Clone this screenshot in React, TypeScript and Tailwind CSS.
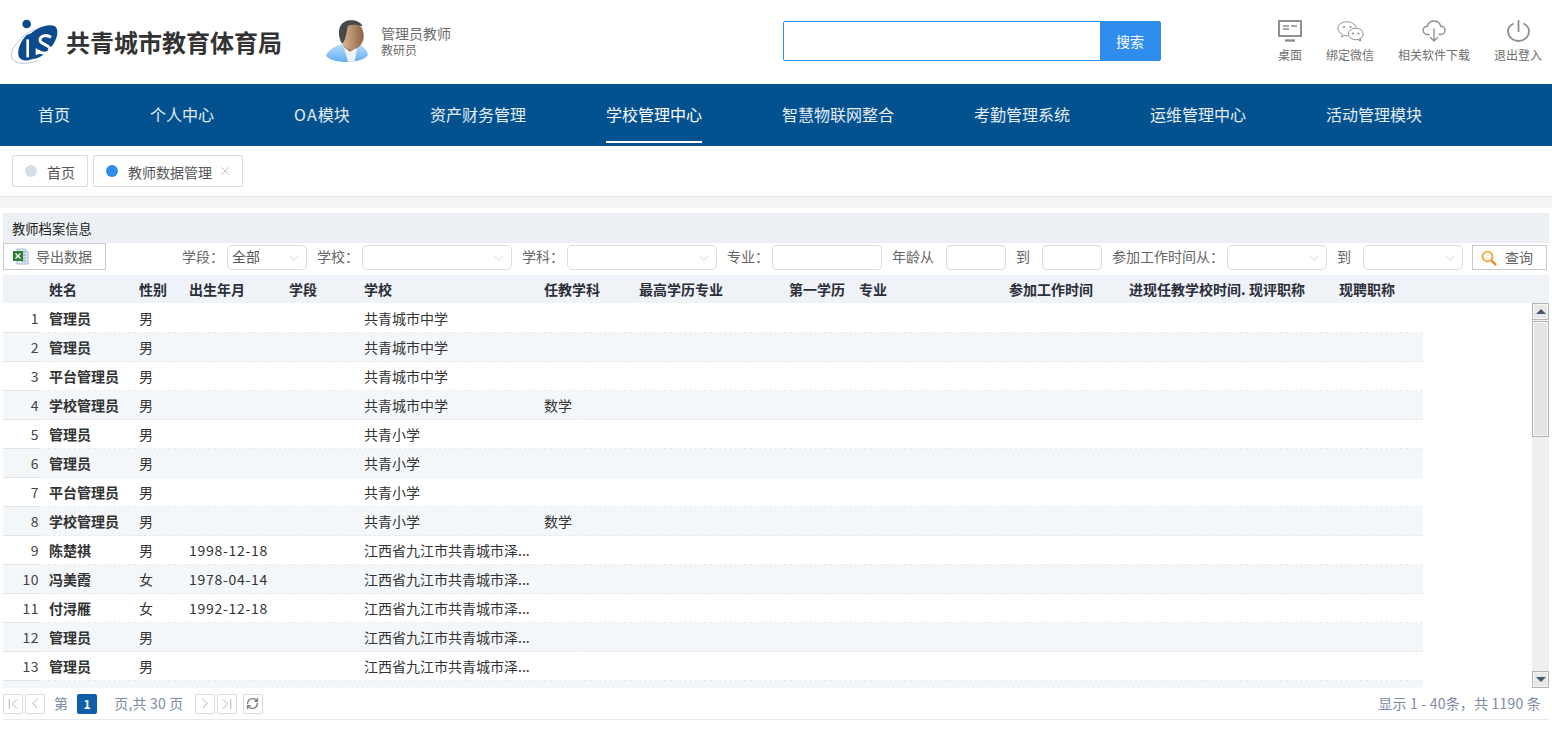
import React from "react";
import { ChevronDown, ChevronFirst, ChevronLast, ChevronLeft, ChevronRight, RefreshCw, X } from "lucide-react";

const navItems = ["首页", "个人中心", "OA模块", "资产财务管理", "学校管理中心", "智慧物联网整合", "考勤管理系统", "运维管理中心", "活动管理模块"];

const headers = ["", "姓名", "性别", "出生年月", "学段", "学校", "任教学科", "最高学历专业", "第一学历", "专业", "参加工作时间", "进现任教学校时间.", "现评职称", "现聘职称"];

const longSchool = "江西省九江市共青城市泽...";

const rows = [
  ["管理员", "男", "", "共青城市中学", ""],
  ["管理员", "男", "", "共青城市中学", ""],
  ["平台管理员", "男", "", "共青城市中学", ""],
  ["学校管理员", "男", "", "共青城市中学", "数学"],
  ["管理员", "男", "", "共青小学", ""],
  ["管理员", "男", "", "共青小学", ""],
  ["平台管理员", "男", "", "共青小学", ""],
  ["学校管理员", "男", "", "共青小学", "数学"],
  ["陈楚祺", "男", "1998-12-18", longSchool, ""],
  ["冯美霞", "女", "1978-04-14", longSchool, ""],
  ["付浔雁", "女", "1992-12-18", longSchool, ""],
  ["管理员", "男", "", longSchool, ""],
  ["管理员", "男", "", longSchool, ""],
  ["", "", "", "", ""],
];

const gridCols = "grid grid-cols-[43px_90px_50px_100px_75px_180px_95px_150px_70px_150px_120px_120px_90px_87px]";

// coordinates are 3x the screen pixels
const Logo = () => (
  <svg width="60" height="58" viewBox="0 0 180 174" className="shrink-0">
    <path d="M88 52 C50 70 14 110 20 136 C25 156 60 160 100 146" fill="none" stroke="#a9bdd3" strokeWidth="2.500" />
    <path d="M76 66 C95 46 130 34 148 42 C164 50 158 82 138 106 C122 126 100 142 84 140 C74 138 70 128 72 118 Z" fill="#0b4a8c" />
    <path d="M40 128 C38 105 50 84 66 68 L86 62 C80 85 84 115 92 136 L84 141 C62 150 42 144 40 128 Z" fill="#0b4a8c" />
    <circle cx="65" cy="36" r="13" fill="#0b4a8c" />
    <path d="M68 82 L68 136" stroke="#fff" strokeWidth="8" />
    <path d="M138 76 C122 66 106 72 105 84 C105 98 136 98 135 112 C133 126 112 128 98 116" fill="none" stroke="#fff" strokeWidth="9" />
    <path d="M92 108 L112 122 L92 130 Z" fill="#fff" />
  </svg>
);

const Avatar = () => (
  <svg width="55" height="52" viewBox="0 0 165 156" className="shrink-0">
    <defs>
      <linearGradient id="shirt" x1="0" y1="0" x2="0" y2="1">
        <stop offset="0" stopColor="#b9defa" />
        <stop offset="1" stopColor="#62adf2" />
      </linearGradient>
      <linearGradient id="skin" x1="0" y1="0" x2="1" y2="0">
        <stop offset="0" stopColor="#e3c09e" />
        <stop offset="1" stopColor="#8c6243" />
      </linearGradient>
    </defs>
    <path d="M18 122 C24 106 42 96 62 88 L118 88 C132 96 142 108 144 120 C136 132 112 141 84 141 C56 141 28 136 18 122 Z" fill="url(#shirt)" />
    <path d="M70 92 L84 140 L104 140 L112 96 Z" fill="#f1f3f3" />
    <path d="M70 75 L110 75 L106 100 L90 110 L72 96 Z" fill="#9a6e4e" />
    <ellipse cx="95" cy="62" rx="36" ry="42" fill="url(#skin)" />
    <path d="M66 85 C52 62 54 28 74 20 C92 12 120 16 128 34 C112 28 96 28 84 32 C80 44 80 58 76 68 C74 76 70 84 66 85 Z" fill="#46484a" />
  </svg>
);

const DesktopIcon = () => (
  <svg width="24" height="22" viewBox="0 0 24 22" fill="none" stroke="#8f8f8f">
    <rect x="1" y="1" width="22" height="15" strokeWidth="2" />
    <path d="M5 6h6M13 6h6M5 9h6" strokeWidth="1.300" />
    <path d="M7 20.500h10" strokeWidth="2.400" />
  </svg>
);

const WechatIcon = () => (
  <svg width="27" height="21" viewBox="0 0 27 21" fill="none" stroke="#8f8f8f" strokeWidth="1">
    <path d="M11 14.800c-1 0-2.400-.1-3.500-.5L4.700 16l.6-2.800C2.500 11.800.8 9.700.8 7.500.8 3.700 5 .8 10 .8c4.300 0 8 2 9 5.700" />
    <ellipse cx="18.800" cy="13" rx="7.400" ry="5.800" />
    <path d="M23 17.500l.9 2.500-3-1.300" />
    <circle cx="7" cy="6" r="1.100" fill="#8f8f8f" stroke="none" />
    <circle cx="13.500" cy="6" r="1.100" fill="#8f8f8f" stroke="none" />
    <circle cx="16" cy="12.500" r="1.100" fill="#8f8f8f" stroke="none" />
    <circle cx="21.500" cy="12.500" r="1.100" fill="#8f8f8f" stroke="none" />
  </svg>
);

const CloudIcon = () => (
  <svg width="24" height="22" viewBox="0 0 24 22" fill="none" stroke="#8f8f8f" strokeWidth="1.400">
    <path d="M7.500 14.500H5.500C3 14.500 1 12.500 1 10.300s1.800-4.200 4.300-4C6 3.200 8.800 1 12 1s6 2.200 6.700 5.300C21.200 6.100 23 8 23 10.300s-2 4.200-4.500 4.200h-2" />
    <path d="M12 8.500v12.500M8 17l4 4 4-4" />
  </svg>
);

const PowerIcon = () => (
  <svg width="23" height="22" viewBox="0 0 23 22" fill="none" stroke="#8f8f8f" strokeWidth="1.800">
    <path d="M11.500 0v12" />
    <path d="M6.500 3.500C3.200 5.200 1 8 1 11.200 1 16.800 5.700 21 11.500 21S22 16.800 22 11.200c0-3.200-2.200-6-5.500-7.700" />
  </svg>
);

const ExcelIcon = () => (
  <svg width="17" height="17" viewBox="0 0 17 17">
    <path d="M5 1h8l3 3v12H5Z" fill="#dfe8f3" stroke="#8ea6c4" strokeWidth="0.800" />
    <path d="M9 4h5M9 7h5M9 10h5M9 13h5" stroke="#7f9cbe" strokeWidth="1" />
    <rect x="1" y="3" width="10" height="10" fill="#2e7d32" />
    <path d="M3.500 5.500l5 5M8.500 5.500l-5 5" stroke="#fff" strokeWidth="1.300" />
  </svg>
);

const SearchIcon = () => (
  <svg width="16" height="16" viewBox="0 0 16 16" fill="none">
    <circle cx="6.500" cy="6.500" r="5" stroke="#f39a2b" strokeWidth="1.600" fill="#fff8ec" />
    <path d="M10.500 10.500L15 15" stroke="#ee8412" strokeWidth="2.400" />
  </svg>
);

const HeaderLink = ({ icon, label, className }: { icon: React.ReactNode; label: string; className: string }) => (
  <div className={`flex flex-col items-center ${className}`}>
    <div className="h-[22px] flex items-center justify-center">{icon}</div>
    <span className="mt-[6px] text-xs leading-[14px] text-[#6f6f6f] whitespace-nowrap">{label}</span>
  </div>
);

const FieldLabel = ({ className, children }: { className: string; children: React.ReactNode }) => (
  <span className={`pb-[2px] whitespace-nowrap ${className}`}>{children}</span>
);

const SelectBox = ({ className, value }: { className: string; value?: string }) => (
  <div className={`h-[25px] border border-[#dddddd] rounded-[5px] flex items-center justify-between pl-[4px] pr-[3px] text-[#555] bg-white ${className}`}>
    <span className="pb-[2px]">{value}</span>
    <ChevronDown size={18} strokeWidth={1.200} className="text-[#cdd1dd]" />
  </div>
);

const TextBox = ({ className }: { className: string }) => (
  <div className={`h-[25px] border border-[#dddddd] rounded-[4px] bg-white ${className}`} />
);

const PageBtn = ({ children, className = "" }: { children: React.ReactNode; className?: string }) => (
  <div className={`w-[20px] h-[20px] border border-[#d5dbe3] rounded-[2px] flex items-center justify-center text-[#8d96a5] ${className}`}>{children}</div>
);

export default function App() {
  return (
    <div className="w-[1552px] h-[729px] overflow-hidden bg-white text-[14px] text-[#333] font-['Noto_Sans_CJK_SC','Liberation_Sans',sans-serif]">
      {/* 顶部 */}
      <header className="h-[84px] flex items-start">
        <div className="ml-[5px] mt-[12px]"><Logo /></div>
        <h1 className="ml-px mt-[23px] text-[24px] leading-[38px] font-bold text-[#333] whitespace-nowrap">共青城市教育体育局</h1>
        <div className="ml-[38px] mt-[15px]"><Avatar /></div>
        <div className="ml-[6px] mt-[24px] text-[#6b6b6b]">
          <div className="text-[14px] leading-[18px]">管理员教师</div>
          <div className="text-[12px] leading-[15px]">教研员</div>
        </div>
        <div className="ml-[332px] mt-[21px] w-[378px] h-[40px] flex border border-[#2e8ded] rounded-[2px]">
          <div className="flex-1" />
          <div className="w-[60px] bg-[#2e8ded] text-white flex items-center justify-center">搜索</div>
        </div>
        <div className="ml-[117px] mt-[20px] flex items-start">
          <HeaderLink icon={<DesktopIcon />} label="桌面" className="w-[24px]" />
          <HeaderLink icon={<WechatIcon />} label="绑定微信" className="w-[48px] ml-[24px]" />
          <HeaderLink icon={<CloudIcon />} label="相关软件下载" className="w-[72px] ml-[24px]" />
          <HeaderLink icon={<PowerIcon />} label="退出登入" className="w-[48px] ml-[24px]" />
        </div>
      </header>

      {/* 导航 */}
      <nav className="h-[62px] bg-[#03528f] flex gap-20 pl-[38px] text-[16px] text-white/90">
        {navItems.map((item) => (
          <div
            key={item}
            className={`h-[59px] leading-[60px] whitespace-nowrap ${item === "学校管理中心" ? "border-b-2 border-white text-white" : ""}`}
          >
            {item === "OA模块" ? <><span className="tracking-[1.200px]">OA</span>模块</> : item}
          </div>
        ))}
      </nav>

      {/* 标签 */}
      <div className="h-[51px] border-b border-[#e5e5e5] flex items-start pl-[12px] pt-[9px] gap-[5px] text-[#555]">
        <div className="h-[32px] w-[76px] border border-[#d5dee7] rounded-[2px] flex items-center pl-[12px]">
          <span className="w-[12px] h-[12px] rounded-full bg-[#d5dfe8]" />
          <span className="ml-[10px] pt-[2px]">首页</span>
        </div>
        <div className="h-[32px] w-[150px] border border-[#d5dee7] rounded-[2px] flex items-center pl-[12px]">
          <span className="w-[12px] h-[12px] rounded-full bg-[#2e8ded]" />
          <span className="ml-[10px] pt-[2px]">教师数据管理</span>
          <X size={14} strokeWidth={1} className="ml-[6px] text-[#9a9a9a]" />
        </div>
      </div>
      <div className="h-[11px] bg-[#f4f4f4]" />

      {/* 内容 */}
      <main className="pt-[5px] pl-[3px] pr-[3px]">
        <div className="h-[30px] bg-[#eceff3] pl-[9px] text-[13.300px] leading-[31px] text-[#222]">教师档案信息</div>
        <div className="h-[32px] flex items-start text-[#666]">
          <div className="w-[103px] h-[27px] border border-[#c9c9c9] flex items-center pl-[8px]">
            <ExcelIcon />
            <span className="ml-[7px]">导出数据</span>
          </div>
          <div className="flex items-center mt-[2px]">
            <FieldLabel className="ml-[76px] w-[45px]">学段：</FieldLabel>
            <SelectBox className="w-[80px]" value="全部" />
            <FieldLabel className="ml-[10px] w-[45px]">学校：</FieldLabel>
            <SelectBox className="w-[150px]" />
            <FieldLabel className="ml-[10px] w-[45px]">学科：</FieldLabel>
            <SelectBox className="w-[150px]" />
            <FieldLabel className="ml-[10px] w-[45px]">专业：</FieldLabel>
            <TextBox className="w-[110px]" />
            <FieldLabel className="ml-[10px] w-[54px]">年龄从</FieldLabel>
            <TextBox className="w-[60px]" />
            <FieldLabel className="ml-[10px] w-[26px]">到</FieldLabel>
            <TextBox className="w-[60px]" />
            <FieldLabel className="ml-[10px] w-[115px]">参加工作时间从：</FieldLabel>
            <SelectBox className="w-[100px]" />
            <FieldLabel className="ml-[10px] w-[26px]">到</FieldLabel>
            <SelectBox className="w-[100px]" />
            <div className="ml-[9px] w-[75px] h-[25px] border border-[#c9c9c9] flex items-center pl-[8px]">
              <SearchIcon />
              <span className="ml-[8px]">查询</span>
            </div>
          </div>
        </div>

        <div className={`${gridCols} h-[28px] bg-[#eff2f6] font-bold text-[#2a2f3a] leading-[28px]`}>
          {headers.map((h, i) => (
            <div key={i} className="pl-[3px] whitespace-nowrap overflow-hidden">{h}</div>
          ))}
        </div>

        <div className="relative h-[385px] overflow-hidden">
          <div className="pt-px">
            {rows.map((row, i) => (
              <div
                key={i}
                className={`${gridCols} w-[1420px] h-[29px] leading-[28px] border-b border-dashed border-[#e6ebf1] ${i % 2 === 1 ? "bg-[#f4f7fa]" : ""}`}
              >
                <div className="w-[37px] text-right pr-px tracking-[0.500px] border-b border-[#e3e3e3] h-[29px] text-[#444]">{i + 1 < 14 ? i + 1 : ""}</div>
                <div className="pl-[3px] font-bold whitespace-nowrap">{row[0]}</div>
                <div className="pl-[3px]">{row[1]}</div>
                <div className="pl-[3px] tracking-[0.700px] whitespace-nowrap">{row[2]}</div>
                <div />
                <div className="pl-[3px] whitespace-nowrap">{row[3]}</div>
                <div className="pl-[3px]">{row[4]}</div>
              </div>
            ))}
          </div>
          {/* 滚动条 */}
          <div className="absolute right-0 top-0 w-[17px] h-[385px] bg-[#efefef] flex flex-col justify-between">
            <div className="h-[17px] border border-[#b4b4b4] shadow-[inset_0_0_0_1px_#f6f6f6] bg-[#e8e8e8] flex items-center justify-center">
              <span className="border-x-[5px] border-x-transparent border-b-[5px] border-b-[#44586f]" />
            </div>
            <div className="absolute top-[18px] left-0 w-[17px] h-[116px] border border-[#b4b4b4] shadow-[inset_0_0_0_1px_#f6f6f6] bg-[#e4e4e4]" />
            <div className="h-[17px] border border-[#b4b4b4] shadow-[inset_0_0_0_1px_#f6f6f6] bg-[#e8e8e8] flex items-center justify-center">
              <span className="border-x-[5px] border-x-transparent border-t-[5px] border-t-[#44586f]" />
            </div>
          </div>
        </div>

        {/* 分页 */}
        <div className="h-[32px] border-b border-[#e8e8e8] flex items-center text-[#7d8ba5] tracking-[0.200px]">
          <PageBtn><ChevronFirst size={18} strokeWidth={1} /></PageBtn>
          <PageBtn className="ml-[2px]"><ChevronLeft size={19} strokeWidth={1} /></PageBtn>
          <span className="ml-[9px]">第</span>
          <span className="ml-[9px] w-[20px] h-[20px] rounded-[2px] bg-[#0f5fa8] text-white text-[12px] font-bold flex items-center justify-center">1</span>
          <span className="ml-[17px] whitespace-nowrap">页,共 30 页</span>
          <PageBtn className="ml-[11px]"><ChevronRight size={19} strokeWidth={1} /></PageBtn>
          <PageBtn className="ml-[2px]"><ChevronLast size={18} strokeWidth={1} /></PageBtn>
          <PageBtn className="ml-[6px]"><RefreshCw size={13} strokeWidth={2.600} className="text-[#7d7d7d]" /></PageBtn>
          <span className="ml-auto mr-[8px] whitespace-nowrap">显示 1 - 40条，共 1190 条</span>
        </div>
      </main>
    </div>
  );
}
